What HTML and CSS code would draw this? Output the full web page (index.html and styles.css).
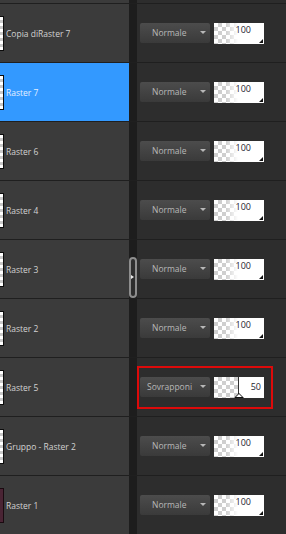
FILE: index.html
```html
<!DOCTYPE html>
<html lang="en">
<head>
    <meta charset="UTF-8">
    <meta name="viewport" content="width=device-width, initial-scale=1.0">
    <title>Livelli</title>
    <link rel="stylesheet" href="styles.css">
</head>
<body>
    <div class="layers">
        <div class="row stub">
            <div class="name"></div>
            <div class="props"></div>
        </div>

        <div class="row">
            <div class="name"><span class="thumb"></span>Copia diRaster 7</div>
            <div class="props">
                <div class="blend">Normale<span class="arrow"></span></div>
                <div class="opacity">100<span class="corner"></span></div>
            </div>
        </div>

        <div class="row">
            <div class="name selected"><span class="thumb"></span>Raster 7</div>
            <div class="props">
                <div class="blend">Normale<span class="arrow"></span></div>
                <div class="opacity">100<span class="corner"></span></div>
            </div>
        </div>

        <div class="row">
            <div class="name"><span class="thumb"></span>Raster 6</div>
            <div class="props">
                <div class="blend">Normale<span class="arrow"></span></div>
                <div class="opacity">100<span class="corner"></span></div>
            </div>
        </div>

        <div class="row">
            <div class="name"><span class="thumb"></span>Raster 4</div>
            <div class="props">
                <div class="blend">Normale<span class="arrow"></span></div>
                <div class="opacity">100<span class="corner"></span></div>
            </div>
        </div>

        <div class="row">
            <div class="name"><span class="thumb"></span>Raster 3</div>
            <div class="props">
                <div class="blend">Normale<span class="arrow"></span></div>
                <div class="opacity">100<span class="corner"></span></div>
            </div>
            <span class="handle"><span class="handle-arrow"></span></span>
        </div>

        <div class="row">
            <div class="name"><span class="thumb"></span>Raster 2</div>
            <div class="props">
                <div class="blend">Normale<span class="arrow"></span></div>
                <div class="opacity">100<span class="corner"></span></div>
            </div>
        </div>

        <div class="row">
            <div class="name"><span class="thumb"></span>Raster 5</div>
            <div class="props">
                <div class="blend blend-left">Sovrapponi<span class="arrow"></span></div>
                <div class="opacity half">50<span class="marker"></span></div>
            </div>
            <span class="highlight"></span>
        </div>

        <div class="row">
            <div class="name"><span class="thumb"></span>Gruppo - Raster 2</div>
            <div class="props">
                <div class="blend">Normale<span class="arrow"></span></div>
                <div class="opacity">100<span class="corner"></span></div>
            </div>
        </div>

        <div class="row">
            <div class="name"><span class="thumb dark"></span>Raster 1</div>
            <div class="props">
                <div class="blend">Normale<span class="arrow"></span></div>
                <div class="opacity">100<span class="corner"></span></div>
            </div>
        </div>
    </div>
</body>
</html>
```

FILE: styles.css
```css
body {
    margin: 0;
    background-color: #1d1d1d;
    font-family: "Open Sans", "Noto Sans", sans-serif;
    font-size: 8.5px;
    overflow: hidden;
}
.layers {
    display: flex;
    flex-direction: column;
    width: 286px;
    height: 534px;
}
.row {
    position: relative;
    display: grid;
    grid-template-columns: 129px 1fr;
    column-gap: 8px;
    height: 58px;
    border-top: 1px solid #1f1f1f;
}
.row.stub {
    height: 3px;
    border-top: none;
}
.name {
    display: flex;
    align-items: center;
    gap: 2px;
    background-color: #3b3b3b;
    color: #d2d2d2;
}
.name.selected {
    background-color: #3399ff;
    color: #e4f0ff;
}
.thumb {
    width: 3px;
    height: 33px;
    border: 1px solid #0c0c0c;
    border-left: none;
    background-color: #fff;
    background-image:
        linear-gradient(45deg, #c8c8c8 25%, transparent 25%, transparent 75%, #c8c8c8 75%),
        linear-gradient(45deg, #c8c8c8 25%, transparent 25%, transparent 75%, #c8c8c8 75%);
    background-size: 6px 6px;
    background-position: 0 0, 3px 3px;
}
.thumb.dark {
    background: #4a2434;
    border-color: #1a0a10;
}
.props {
    display: flex;
    align-items: center;
    gap: 4px;
    padding-left: 3px;
    background-color: #2d2d2d;
}
.blend {
    position: relative;
    width: 70px;
    height: 20px;
    box-sizing: border-box;
    padding-left: 12px;
    line-height: 20px;
    border-radius: 2px;
    background: linear-gradient(#4c4c4c, #3a3a3a);
    color: #b8b8b8;
}
.blend-left {
    padding-left: 7px;
}
.arrow {
    position: absolute;
    right: 4px;
    top: 8px;
    border-left: 3px solid transparent;
    border-right: 3px solid transparent;
    border-top: 3px solid #b8b8b8;
}
.opacity {
    position: relative;
    width: 50px;
    height: 21px;
    box-sizing: border-box;
    padding: 1px 13px 0 0;
    line-height: 12px;
    text-align: right;
    color: #1c2430;
    font-size: 9px;
    background-color: #fff;
    background-image:
        linear-gradient(to right, rgba(255,255,255,0) 0, rgba(255,255,255,0) 12px, #fff 24px),
        linear-gradient(45deg, #cfcfcf 25%, transparent 25%, transparent 75%, #cfcfcf 75%),
        linear-gradient(45deg, #cfcfcf 25%, transparent 25%, transparent 75%, #cfcfcf 75%);
    background-size: 100% 100%, 8px 8px, 8px 8px;
    background-position: 0 0, 0 0, 4px 4px;
}
.opacity.half {
    padding: 4px 3px 0 0;
    background-image:
        linear-gradient(to right, transparent 24px, #333 24px, #333 25px, #fff 25px),
        linear-gradient(45deg, #cfcfcf 25%, transparent 25%, transparent 75%, #cfcfcf 75%),
        linear-gradient(45deg, #cfcfcf 25%, transparent 25%, transparent 75%, #cfcfcf 75%);
}
.corner {
    position: absolute;
    right: 1px;
    bottom: 1px;
    border-left: 4px solid transparent;
    border-bottom: 4px solid #111;
}
.marker {
    position: absolute;
    left: 20px;
    bottom: 0;
    width: 0;
    height: 0;
    border-left: 5px solid transparent;
    border-right: 5px solid transparent;
    border-bottom: 5px solid #111;
}
.marker::after {
    content: "";
    position: absolute;
    left: -3px;
    top: 1.5px;
    border-left: 3px solid transparent;
    border-right: 3px solid transparent;
    border-bottom: 3.5px solid #fff;
}
.highlight {
    position: absolute;
    left: 137px;
    top: 8px;
    width: 136px;
    height: 43px;
    box-sizing: border-box;
    border: 2px solid #dd0a0a;
}
.handle {
    position: absolute;
    left: 129px;
    top: 17px;
    width: 8px;
    height: 41px;
    box-sizing: border-box;
    border: 2px solid #8e8e8e;
    border-radius: 4px;
    background-color: #2e2e2e;
}
.handle-arrow {
    position: absolute;
    left: 0;
    top: 16px;
    border-top: 2.5px solid transparent;
    border-bottom: 2.5px solid transparent;
    border-left: 3px solid #ececec;
}
```
